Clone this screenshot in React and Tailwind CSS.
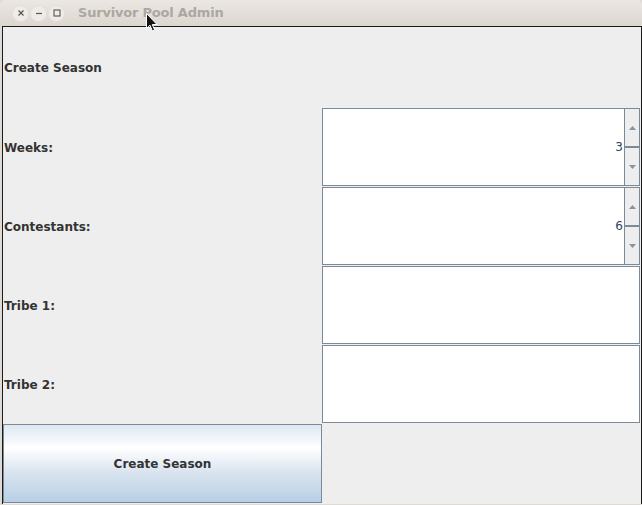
import React from 'react';

const font = { fontFamily: '"DejaVu Sans", Verdana, sans-serif' };
const labelCls = 'flex items-center pl-[1px] text-[12px] font-bold text-[#333333]';

function Spinner({ value }) {
  return (
    <div className="flex h-[79px] border-b border-r border-b-[#eeeeee] border-r-[#eeeeee]">
      <div className="flex flex-1 border border-[#7a8a99] bg-white">
        <div className="flex flex-1 items-center justify-end pr-[1px] text-[12px] text-[#2e4466]">{value}</div>
        <div className="flex w-[15px] flex-col border-l border-[#7a8a99] bg-[#eeeeee]">
          <div className="flex flex-1 items-center justify-center border-b-2 border-[#7a8a99]">
            <svg width="7" height="4" viewBox="0 0 7 4"><path d="M3.5 0 L7 4 L0 4 Z" fill="#8495a6" /></svg>
          </div>
          <div className="flex flex-1 items-center justify-center">
            <svg width="7" height="4" viewBox="0 0 7 4"><path d="M0 0 L7 0 L3.5 4 Z" fill="#8495a6" /></svg>
          </div>
        </div>
      </div>
    </div>
  );
}

function Field() {
  return (
    <div className="flex h-[79px] border-b border-r border-b-[#eeeeee] border-r-[#eeeeee]">
      <div className="flex-1 border border-[#7a8a99] bg-white" />
    </div>
  );
}

function TitleButton({ children }) {
  return (
    <div className="flex h-[17px] w-[17px] items-center justify-center rounded-full border border-[#e2ded9] bg-[#efece8] text-[#555555]">
      {children}
    </div>
  );
}

export default function App() {
  return (
    <div className="relative h-[505px] w-[642px] overflow-hidden bg-[#dedad5]" style={font}>
      <div className="flex h-[26px] items-center rounded-t-[5px] bg-gradient-to-b from-[#ebe7e3] to-[#dcd6cf] pl-[12px]">
        <div className="flex gap-[1px]">
          <TitleButton>
            <svg width="8" height="8" viewBox="0 0 8 8"><path d="M1.5 1.5 L6.5 6.5 M6.5 1.5 L1.5 6.5" stroke="#555" strokeWidth="1.2" /></svg>
          </TitleButton>
          <TitleButton>
            <svg width="8" height="8" viewBox="0 0 8 8"><path d="M1 4.5 L7 4.5" stroke="#555" strokeWidth="1.2" /></svg>
          </TitleButton>
          <TitleButton>
            <svg width="8" height="8" viewBox="0 0 8 8"><rect x="1" y="1" width="6" height="6" fill="none" stroke="#555" strokeWidth="1.1" /></svg>
          </TitleButton>
        </div>
        <div className="ml-[13px] text-[13px] font-bold tracking-[-0.2px] text-[#aca7a1]">Survivor Pool Admin</div>
      </div>

      <div className="ml-[2px] w-[640px] border-l border-r border-t border-[#1b1b1b] bg-[#eeeeee]">
        <div className="grid grid-cols-[319px_319px] grid-rows-[81px_79px_79px_79px_79px_80px]">
          <div className={labelCls}>Create Season</div>
          <div />
          <div className={labelCls}>Weeks:</div>
          <Spinner value="3" />
          <div className={labelCls}>Contestants:</div>
          <Spinner value="6" />
          <div className={labelCls}>Tribe 1:</div>
          <Field />
          <div className={labelCls}>Tribe 2:</div>
          <Field />
          <div className="flex h-[79px] items-center justify-center border border-[#7a8a99] bg-[linear-gradient(to_bottom,#dde8f3_0%,#ffffff_30%,#dbe5f0_60%,#b8cfe5_100%)] text-[12px] font-bold text-[#333333]">
            Create Season
          </div>
          <div />
        </div>
      </div>

      <svg className="absolute left-[146px] top-[13px]" width="13" height="20" viewBox="0 0 13 20">
        <path d="M0.5 0.5 L0.5 15.5 L4 12.2 L6.4 18 L8.6 17 L6.3 11.5 L11 11.5 Z" fill="#111" stroke="#fff" strokeWidth="1" />
      </svg>
    </div>
  );
}
